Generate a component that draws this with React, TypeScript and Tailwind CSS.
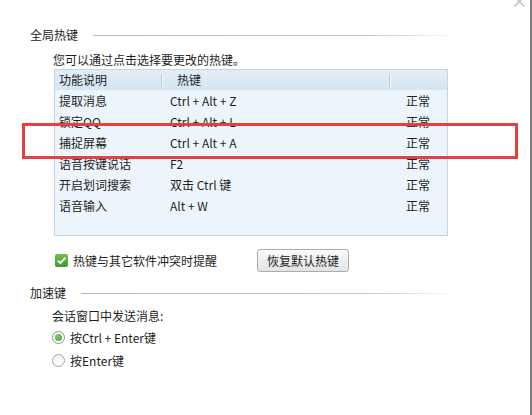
import React from 'react';

const rows = [
  { name: '提取消息', key: 'Ctrl + Alt + Z', state: '正常' },
  { name: '锁定QQ', key: 'Ctrl + Alt + L', state: '正常' },
  { name: '捕捉屏幕', key: 'Ctrl + Alt + A', state: '正常' },
  { name: '语音按键说话', key: 'F2', state: '正常' },
  { name: '开启划词搜索', key: '双击 Ctrl 键', state: '正常' },
  { name: '语音输入', key: 'Alt + W', state: '正常' },
];

const SectionTitle = ({ title }: { title: string }) => (
  <div className="flex items-center w-[430px] h-[16px]">
    <span className="leading-[16px] text-[#222]">{title}</span>
    <div className="flex-1 ml-[15px] h-px bg-[linear-gradient(to_right,#a9bfd0_0%,#b7cad8_75%,rgba(255,255,255,0)_100%)]" />
  </div>
);

const HeaderDivider = () => (
  <div className="absolute right-0 top-[4px] h-[13px] w-[2px] border-l border-[#b5c8d6] bg-white/70" />
);

export default function App() {
  return (
    <div className="relative w-[532px] h-[415px] bg-white border-r-2 border-[#7d7d7d] overflow-hidden font-['Noto_Sans_CJK_SC',sans-serif] text-[12px] text-[#1e1e1e]">
      {/* close button, cut off by the top edge */}
      <svg className="absolute right-[4px] top-[-5px]" width="13" height="13" viewBox="0 0 13 13">
        <path d="M1.5 1.5 L11.5 11.5 M11.5 1.5 L1.5 11.5" stroke="#c4c4c4" strokeWidth="1.6" />
      </svg>

      <div className="pt-[27px] pl-[30px]">
        <SectionTitle title="全局热键" />

        <div className="pl-[24px] mt-[9px]">
          <p className="leading-[16px] -ml-px">您可以通过点击选择要更改的热键。</p>

          <div className="mt-px w-[394px] h-[167px] border border-[#c3d6e4] bg-[#ecf5fb]">
            <div className="flex h-[20px] bg-[linear-gradient(to_bottom,#e2eef7,#d5e5f1)] leading-[20px]">
              <div className="relative w-[108px] pl-[4px]">功能说明<HeaderDivider /></div>
              <div className="relative w-[228px] pl-[14px]">热键<HeaderDivider /></div>
              <div className="flex-1" />
            </div>
            {rows.map((r) => (
              <div key={r.name} className="flex h-[21px] leading-[21px]">
                <div className="w-[108px] pl-[4px]">{r.name}</div>
                <div className="w-[228px] pl-[7px]">{r.key}</div>
                <div className="flex-1 pl-[15px]">{r.state}</div>
              </div>
            ))}
          </div>

          <div className="flex items-center mt-[13px] h-[23px]">
            <div className="ml-px w-[13px] h-[13px] rounded-[2px] bg-[linear-gradient(to_bottom,#6dbf4a,#3f9a2c)] flex items-center justify-center">
              <svg width="11" height="11" viewBox="0 0 11 11">
                <path d="M1.8 5.6 L4.4 8.2 L9.4 2.6" fill="none" stroke="#fff" strokeWidth="1.9" />
              </svg>
            </div>
            <span className="ml-[5px] leading-[16px]">热键与其它软件冲突时提醒</span>
            <button className="ml-[40px] h-[23px] w-[92px] rounded-[3px] border border-[#adadad] bg-[linear-gradient(to_bottom,#fafafa,#e4e4e4)] text-[12px] leading-[21px] text-[#1e1e1e]">
              恢复默认热键
            </button>
          </div>
        </div>

        <div className="mt-[13px]">
          <SectionTitle title="加速键" />
        </div>

        <div className="pl-[22px] mt-[7px]">
          <p className="leading-[16px]">会话窗口中发送消息:</p>
          <div className="mt-[2px] flex items-center h-[23px]">
            <div className="w-[13px] h-[13px] rounded-full border border-[#8f9090] bg-white flex items-center justify-center">
              <div className="w-[7px] h-[7px] rounded-full bg-[radial-gradient(circle_at_40%_35%,#7fcf6a,#3a9a2a)]" />
            </div>
            <span className="ml-[5px] leading-[16px]">按Ctrl + Enter键</span>
          </div>
          <div className="flex items-center h-[23px]">
            <div className="w-[13px] h-[13px] rounded-full border border-[#a3a3a3] bg-[linear-gradient(to_bottom,#f2f2f2,#ffffff)]" />
            <span className="ml-[5px] leading-[16px]">按Enter键</span>
          </div>
        </div>
      </div>

      {/* annotation box */}
      <div className="absolute left-[22px] top-[123px] w-[496px] h-[36px] border-[3px] border-[#e5403e]" />
    </div>
  );
}
